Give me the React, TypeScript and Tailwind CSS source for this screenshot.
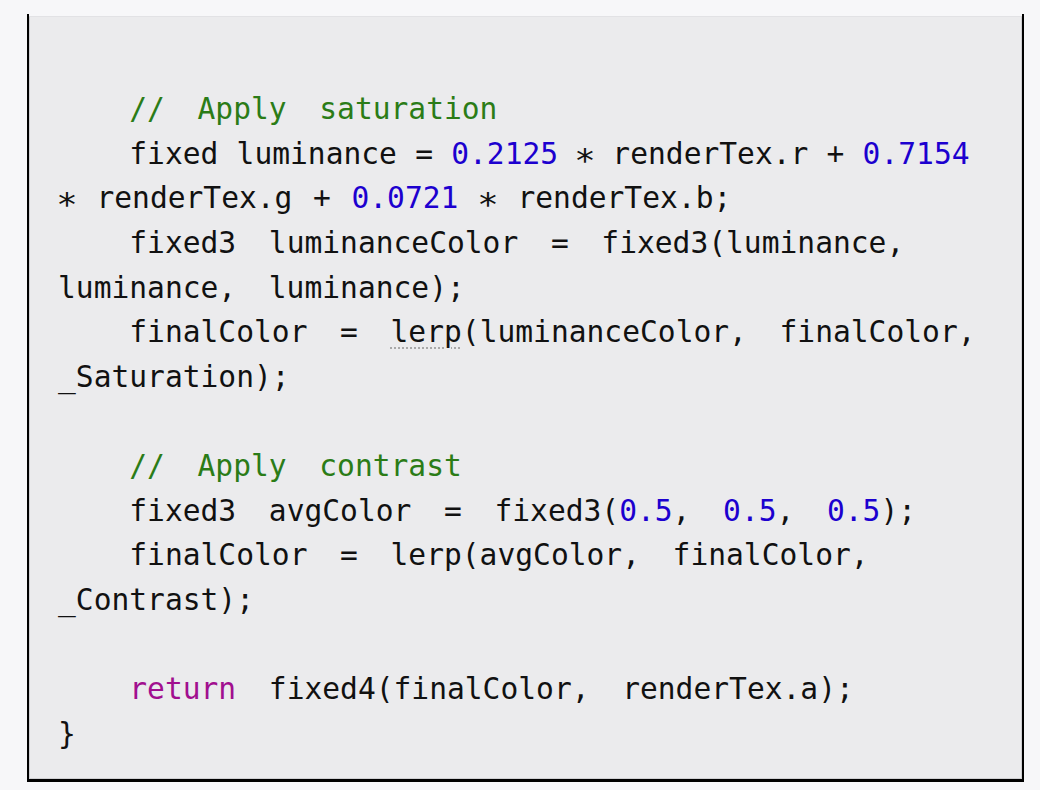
import React from "react";

type Tok = { t: string; k?: "c" | "n" | "kw" | "u" | "s" | "i" };
type Line = { toks: Tok[]; ws: string };

const NEG = "[word-spacing:-1.5px]";
const IND: Tok = { t: "    ", k: "i" };

const lines: Line[] = [
  { ws: NEG, toks: [IND, { t: "//  Apply  saturation", k: "c" }] },
  {
    ws: "[word-spacing:0.4px]",
    toks: [
      IND,
      { t: "fixed luminance = " },
      { t: "0.2125", k: "n" },
      { t: " " },
      { t: "*", k: "s" },
      { t: " renderTex.r + " },
      { t: "0.7154", k: "n" },
    ],
  },
  {
    ws: "[word-spacing:2.8px]",
    toks: [
      { t: "*", k: "s" },
      { t: " renderTex.g + " },
      { t: "0.0721", k: "n" },
      { t: " " },
      { t: "*", k: "s" },
      { t: " renderTex.b;" },
    ],
  },
  { ws: NEG, toks: [IND, { t: "fixed3  luminanceColor  =  fixed3(luminance," }] },
  { ws: NEG, toks: [{ t: "luminance,  luminance);" }] },
  {
    ws: NEG,
    toks: [IND, { t: "finalColor  =  " }, { t: "lerp", k: "u" }, { t: "(luminanceColor,  finalColor," }],
  },
  { ws: "", toks: [{ t: "_Saturation);" }] },
  { ws: "", toks: [{ t: "" }] },
  { ws: NEG, toks: [IND, { t: "//  Apply  contrast", k: "c" }] },
  {
    ws: NEG,
    toks: [
      IND,
      { t: "fixed3  avgColor  =  fixed3(" },
      { t: "0.5", k: "n" },
      { t: ",  " },
      { t: "0.5", k: "n" },
      { t: ",  " },
      { t: "0.5", k: "n" },
      { t: ");" },
    ],
  },
  { ws: NEG, toks: [IND, { t: "finalColor  =  lerp(avgColor,  finalColor," }] },
  { ws: "", toks: [{ t: "_Contrast);" }] },
  { ws: "", toks: [{ t: "" }] },
  {
    ws: NEG,
    toks: [IND, { t: "return", k: "kw" }, { t: "  fixed4(finalColor,  renderTex.a);" }],
  },
  { ws: "", toks: [{ t: "}" }] },
];

function Token({ tok }: { tok: Tok }) {
  if (tok.k === "i") return <span className="[word-spacing:0px]">{tok.t}</span>;
  if (tok.k === "c") return <span className="text-[#2b7c17]">{tok.t}</span>;
  if (tok.k === "n") return <span className="text-[#1c00cf]">{tok.t}</span>;
  if (tok.k === "kw") return <span className="text-[#a10f8f]">{tok.t}</span>;
  if (tok.k === "s")
    return <span className="relative top-[6px] inline-block scale-x-[1.2] scale-y-[1.1]">{tok.t}</span>;
  if (tok.k === "u")
    return (
      <span className="underline decoration-dotted decoration-[#a8a8a8] decoration-[1.5px] underline-offset-[5px]">
        {tok.t}
      </span>
    );
  return <span>{tok.t}</span>;
}

export default function App() {
  return (
    <div className="w-[1040px] h-[790px] bg-[#f7f7f9] overflow-hidden pt-[14px] pl-[27px]">
      <div className="w-[997px] h-[768px] border-x-2 border-b-[3px] border-black bg-[#f7f7f9] pt-[2px]">
        <div className="h-full bg-[#ebebed] border-x border-b border-[#cfcfd2] border-t border-t-[#e2e2e5] pl-[28px] pt-[70px]">
          <div
            className="whitespace-pre text-[29.6px] leading-[44.64px] text-[#111]"
            style={{ fontFamily: '"DejaVu Sans Mono", "Liberation Mono", monospace' }}
          >
            {lines.map((ln, i) => (
              <div key={i} className={`h-[44.64px] ${ln.ws}`}>
                {ln.toks.map((tok, j) => (
                  <Token key={j} tok={tok} />
                ))}
              </div>
            ))}
          </div>
        </div>
      </div>
    </div>
  );
}
